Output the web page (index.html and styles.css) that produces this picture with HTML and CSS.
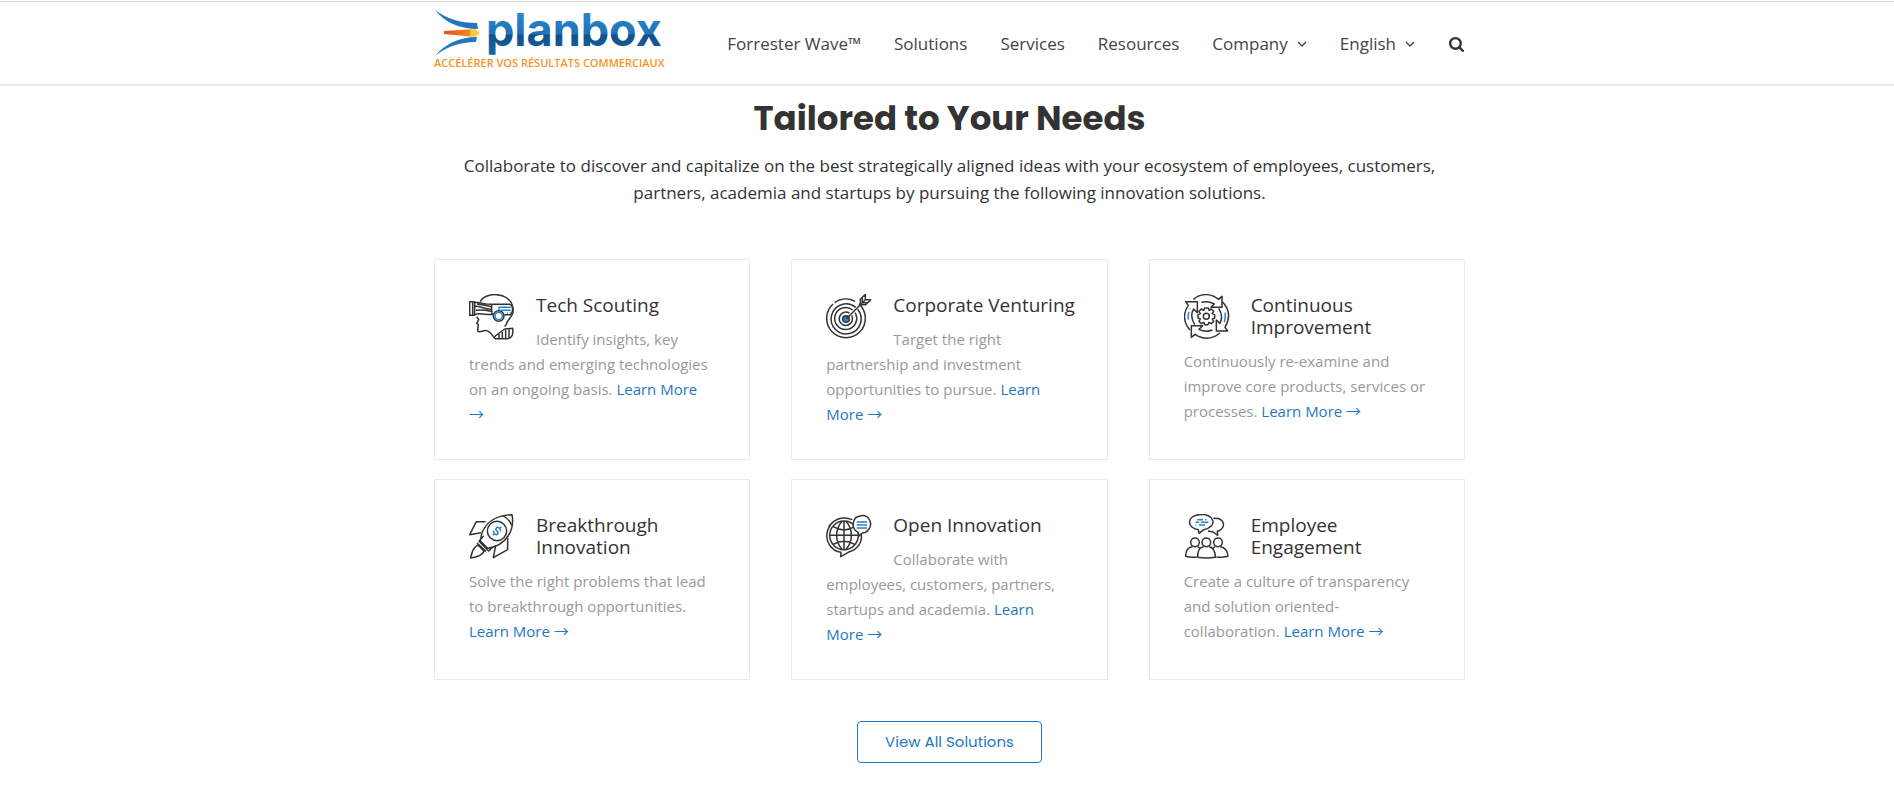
FILE: index.html
```html
<!DOCTYPE html>
<html lang="en">
  <head>
    <meta charset="utf-8" />
    <meta name="viewport" content="width=device-width, initial-scale=1" />
    <title>Planbox - Tailored to Your Needs</title>
    <link rel="stylesheet" href="styles.css">
  </head>
  <body>
    <!-- Header with logo and main menu -->
    <header class="header">
      <div class="container header-inner">
        <a href="#" class="logo">
          <svg width="229" height="60" viewBox="0 0 229 60" role="img" aria-label="Planbox">
            <defs>
              <linearGradient id="logoBlue" x1="0" y1="0" x2="0" y2="1">
                <stop offset="0.2" stop-color="#2a86cd" />
                <stop offset="0.58" stop-color="#2173b6" />
                <stop offset="0.6" stop-color="#10508a" />
                <stop offset="1" stop-color="#1a68a8" />
              </linearGradient>
              <linearGradient id="flame" x1="0" y1="0" x2="1" y2="0">
                <stop offset="0" stop-color="#e8501e" />
                <stop offset="0.7" stop-color="#f58220" />
                <stop offset="0.75" stop-color="#ffc933" />
              </linearGradient>
            </defs>
            <path fill="#2278bd" d="M1 1 Q18 14 43 14 L44 20 Q16 20 1 1Z" />
            <path fill="#2278bd" d="M1 47 Q18 33 42 33 L43 28 Q17 28 1 47Z" />
            <path fill="url(#flame)" d="M10 22 L41 20 L46 24 L41 28 L10 25Z" />
            <text class="logo-name" x="52" y="37" fill="url(#logoBlue)">planbox</text>
            <text class="logo-tagline" x="0" y="58">ACCÉLÉRER VOS RÉSULTATS COMMERCIAUX</text>
          </svg>
        </a>
        <nav class="menu">
          <a href="#">Forrester Wave™</a>
          <a href="#">Solutions</a>
          <a href="#">Services</a>
          <a href="#">Resources</a>
          <a href="#">Company
            <svg class="chevron" viewBox="0 0 10 6"><path d="M1 1 L5 5 L9 1" /></svg>
          </a>
          <a href="#">English
            <svg class="chevron" viewBox="0 0 10 6"><path d="M1 1 L5 5 L9 1" /></svg>
          </a>
          <button type="button" class="search" aria-label="Search">
            <svg viewBox="0 0 16 16"><circle cx="7" cy="7" r="5" /><path d="M11 11 L14 14" /></svg>
          </button>
        </nav>
      </div>
    </header>

    <main class="container">
      <h2 class="title">Tailored to Your Needs</h2>
      <p class="intro">
        Collaborate to discover and capitalize on the best strategically aligned ideas with your ecosystem of employees, customers, partners, academia and startups by pursuing the following innovation solutions.
      </p>

      <div class="cards">
        <div class="card">
          <svg class="icon" viewBox="27 27 138 138">
            <path d="M61 50 C72 22 147 17 158 65 M158 65 C166 93 142 101 139 118 L134 125 M50 95 L56 104 L50 115 L55 118 L53 137 Q55 142 66 139 Q85 130 100 155" />
            <path d="M29 50 H44 V91 H29Z M38 50 V91 M44 52 C66 53 72 58 94 58 H151 M44 63 C66 64 78 75 96 72 M44 89 C66 80 79 94 100 87 M51 57 Q76 60 95 65 M48 76 Q75 73 98 80 M95 58 V88 M151 58 C160 64 160 80 152 89 H133" />
            <path d="M101 157 Q124 139 134 132 L158 130 Q161 160 143 161 H106 Z M117 148 V160 M127 141 V160 M137 135 V160 M147 133 V158" />
            <path class="blue" d="M117 76 V67 H152 M122 76 H152 M141 84 H144 M149 84 H152" />
            <circle class="lens" cx="116" cy="93" r="16" />
            <circle class="blue" cx="116" cy="93" r="11" />
          </svg>
          <h3>Tech Scouting</h3>
          <p>Identify insights, key trends and emerging technologies on an ongoing basis. <a href="#">Learn More →</a></p>
        </div>
        <div class="card">
          <svg class="icon" viewBox="24 27 138 138">
            <path d="M45 57 A58 58 0 1 0 123 57 M111 49 A58 58 0 0 0 50 53" />
            <path d="M113 67 A45 45 0 1 0 119 73 M104 75 A33 33 0 1 0 111 83 M94 84 A20 20 0 1 0 101 91" />
            <circle class="dot" cx="84" cy="102" r="10" />
            <path d="M85 101 L142 44 M127 58 V43 L142 28 V44 H158 L143 59 H127 M133 53 V38 M133 53 H148" />
          </svg>
          <h3>Corporate Venturing</h3>
          <p>Target the right partnership and investment opportunities to pursue. <a href="#">Learn More →</a></p>
        </div>
        <div class="card">
          <svg class="icon" viewBox="24 27 138 138">
            <path d="M52 43 C76 23 105 25 128 43 L138 34 V67 H105 L115 57 Q95 46 76 52" />
            <path d="M42 135 C20 110 22 82 37 61 L29 50 H64 V83 L53 72 Q40 93 56 119" />
            <path d="M132 144 C106 165 80 163 57 148 L46 157 V122 H80 L69 133 Q89 143 109 135" />
            <path d="M139 50 C165 77 160 105 147 127 L155 138 H121 V105 L132 115 Q143 92 128 70" />
            <circle cx="91" cy="94" r="9" />
            <path d="M86 69 H97 L99 76 L106 72 L113 79 L109 86 L116 89 V99 L109 102 L113 109 L106 116 L99 112 L96 119 H86 L83 112 L76 116 L69 109 L73 102 L66 99 V89 L73 86 L69 79 L76 72 L83 76Z" />
            <path class="blue" d="M37 104 Q35 91 39 80 M42 72 V70 M147 83 Q150 97 145 112 M142 119 V121" />
          </svg>
          <h3>Continuous Improvement</h3>
          <p>Continuously re-examine and improve core products, services or processes. <a href="#">Learn More →</a></p>
        </div>
        <div class="card">
          <svg class="icon" viewBox="27 27 138 138">
            <path d="M61 108 C65 67 91 32 156 29 C165 76 139 121 83 130Z M127 32 Q147 40 155 61 M71 92 L57 109 L86 138 L101 124" />
            <path d="M77 50 H49 L29 89 L63 83 M143 98 V134 L100 158 L107 121" />
            <path d="M54 120 Q38 126 32 159 Q65 154 72 139Z M51 114 L78 139" />
            <circle cx="111" cy="78" r="29" />
            <path class="blue" transform="translate(111 78) rotate(45)" d="M8 -6 Q6 -11 0 -11 Q-8 -11 -8 -5 Q-8 0 0 0 Q8 0 8 6 Q8 11 0 11 Q-6 11 -8 6 M0 -18 V-11 M0 11 V18" />
          </svg>
          <h3>Breakthrough Innovation</h3>
          <p>Solve the right problems that lead to breakthrough opportunities. <a href="#">Learn More →</a></p>
        </div>
        <div class="card">
          <svg class="icon" viewBox="24 27 138 138">
            <path d="M103 44 C74 31 39 43 29 76 C19 110 41 139 69 142 L68 155 L91 142 C120 133 135 111 129 84 M32 67 L36 59" />
            <circle cx="78" cy="91" r="43" />
            <path d="M78 48 V134 M35 91 H121 M46 65 Q78 85 110 65 M46 118 Q78 99 110 118 M72 49 C50 74 51 111 73 134 M84 49 C106 74 105 111 83 134" />
            <path class="bubble" d="M121 82 C97 71 103 36 126 33 C152 26 167 56 151 75 C146 81 139 84 133 84 L123 93Z" />
            <path class="blue" d="M116 51 H147 M116 60 H147 M116 69 H147" />
          </svg>
          <h3>Open Innovation</h3>
          <p>Collaborate with employees, customers, partners, startups and academia. <a href="#">Learn More →</a></p>
        </div>
        <div class="card">
          <svg class="icon" viewBox="24 27 138 138">
            <path d="M67 74 C31 69 32 33 69 29 C119 24 125 67 83 74 L69 85Z M112 40 C149 38 151 70 124 79 L125 91 L112 81 L96 78" />
            <circle cx="57" cy="112" r="13" /><circle cx="91" cy="112" r="13" /><circle cx="126" cy="112" r="13" />
            <path d="M64 156 Q44 158 29 154 Q29 127 49 125 M65 125 L73 130 M110 130 L117 125 M133 125 Q154 128 156 154 Q140 158 121 156" />
            <path d="M65 157 Q64 127 83 125 M99 125 Q118 128 118 157 Q92 161 65 157" />
            <path class="blue" d="M64 44 H81 M87 44 H91 M58 52 H69 M75 52 H97 M58 60 H61 M69 60 H87" />
          </svg>
          <h3>Employee Engagement</h3>
          <p>Create a culture of transparency and solution oriented-collaboration. <a href="#">Learn More →</a></p>
        </div>
      </div>

      <div class="more">
        <a href="#" class="button">View All Solutions</a>
      </div>
    </main>
  </body>
</html>
```

FILE: styles.css
```css
* {
  box-sizing: border-box;
}

body {
  margin: 0;
  padding-left: 5px;
  background: #fff;
  color: #333;
  font-family: "Open Sans", "Noto Sans CJK SC", sans-serif;
}

a {
  color: #1f78bf;
  text-decoration: none;
}

.container {
  max-width: 1031px;
  margin: 0 auto;
}

.header {
  margin: 1px 0 0 -5px;
  padding-left: 5px;
  border-top: 1px solid #ddd;
  border-bottom: 2px solid #ebebeb;
}

.header-inner {
  display: flex;
  justify-content: space-between;
  align-items: center;
  min-height: 82px;
}

.logo {
  display: flex;
  padding-bottom: 8px;
}

.logo svg {
  overflow: visible;
}

.logo-name {
  font-family: Inter, sans-serif;
  font-size: 45px;
  font-weight: 700;
}

.logo-tagline {
  font-size: 11px;
  font-weight: 600;
  fill: #f7941e;
}

.menu {
  display: flex;
  align-items: center;
  gap: 33px;
  padding-top: 2px;
  font-size: 17px;
  line-height: 24px;
}

.menu a {
  display: flex;
  align-items: center;
  gap: 9px;
  color: #444;
}

.chevron {
  width: 10px;
  height: 6px;
  fill: none;
  stroke: #444;
  stroke-width: 1.3;
}

.search {
  display: flex;
  padding: 0;
  border: none;
  background: none;
}

.search svg {
  width: 17px;
  height: 17px;
  fill: none;
  stroke: #333;
  stroke-width: 2.2;
  stroke-linecap: round;
}

.title {
  margin: 8px 0 10px;
  font-family: Poppins, Inter, sans-serif;
  font-size: 34px;
  font-weight: 700;
  line-height: 48px;
  text-align: center;
}

.intro {
  max-width: 980px;
  margin: 0 auto 53px;
  font-size: 17px;
  line-height: 27px;
  text-align: center;
}

.cards {
  display: grid;
  grid-template-columns: repeat(auto-fit, minmax(300px, 1fr));
  gap: 19px 41px;
}

.card {
  min-height: 201px;
  padding: 34px 34px 32px;
  border: 1px solid #ebebeb;
}

/* lets the longest title stay on one line */
.card h3 {
  margin: 0 -6px 11px 0;
  font-size: 19px;
  font-weight: 400;
  line-height: 22px;
}

.card p {
  margin: 0;
  color: #999;
  font-size: 15px;
  line-height: 25px;
}

.icon {
  float: left;
  width: 46px;
  height: 46px;
  margin-right: 21px;
  fill: none;
  stroke: #333;
  stroke-width: 4.5;
  stroke-linejoin: round;
}

.icon .blue {
  stroke: #2a82cc;
}

.icon .lens,
.icon .bubble {
  fill: #fff;
}

.icon .dot {
  fill: #2a82cc;
}

.more {
  padding: 41px 0;
  text-align: center;
}

.button {
  display: inline-block;
  padding: 8px 27px;
  border: 1px solid #1f78bf;
  border-radius: 4px;
  font-family: Poppins, Inter, sans-serif;
  font-size: 15px;
  line-height: 24px;
}
```
